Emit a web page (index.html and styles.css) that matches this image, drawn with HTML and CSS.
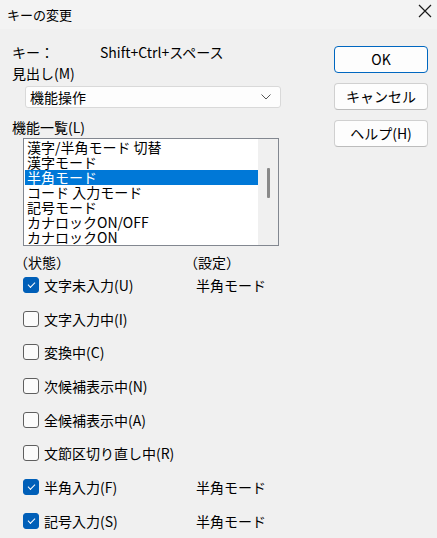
FILE: index.html
```html
<!DOCTYPE html>
<html lang="ja">
<head>
<meta charset="utf-8">
<link rel="stylesheet" href="styles.css">
</head>
<body>
<div class="dialog">
  <div class="titlebar">
    <span class="title">キーの変更</span>
    <svg class="close" width="14" height="14" viewBox="0 0 14 14"><path d="M1 1 L13 13 M13 1 L1 13" stroke="#1a1a1a" stroke-width="1.2" fill="none"/></svg>
  </div>
  <div class="content">
    <div class="left">
      <div class="keyrow"><span class="keylabel">キー：</span><span class="keyval">Shift+Ctrl+スペース</span></div>
      <div class="label">見出し(M)</div>
      <div class="combo"><span>機能操作</span>
        <svg width="10" height="6" viewBox="0 0 10 6"><path d="M0.5 0.5 L5 5 L9.5 0.5" stroke="#555" stroke-width="1" fill="none"/></svg>
      </div>
      <div class="label list-label">機能一覧(L)</div>
      <div class="listbox">
        <div class="items">
          <div class="item">漢字/半角モード 切替</div>
          <div class="item">漢字モード</div>
          <div class="item sel">半角モード</div>
          <div class="item">コード 入力モード</div>
          <div class="item">記号モード</div>
          <div class="item">カナロックON/OFF</div>
          <div class="item">カナロックON</div>
        </div>
        <div class="scroll"><div class="thumb"></div></div>
      </div>
      <div class="heads"><span class="h1">（状態）</span><span class="h2">（設定）</span></div>
      <div class="checks">
        <div class="row"><span class="cb on"></span><span class="cl">文字未入力(U)</span><span class="set">半角モード</span></div>
        <div class="row"><span class="cb"></span><span class="cl">文字入力中(I)</span></div>
        <div class="row"><span class="cb"></span><span class="cl">変換中(C)</span></div>
        <div class="row"><span class="cb"></span><span class="cl">次候補表示中(N)</span></div>
        <div class="row"><span class="cb"></span><span class="cl">全候補表示中(A)</span></div>
        <div class="row"><span class="cb"></span><span class="cl">文節区切り直し中(R)</span></div>
        <div class="row"><span class="cb on"></span><span class="cl">半角入力(F)</span><span class="set">半角モード</span></div>
        <div class="row"><span class="cb on"></span><span class="cl">記号入力(S)</span><span class="set">半角モード</span></div>
      </div>
    </div>
    <div class="right">
      <div class="btn default">OK</div>
      <div class="btn">キャンセル</div>
      <div class="btn">ヘルプ(H)</div>
    </div>
  </div>
</div>
</body>
</html>
```
FILE: styles.css
```css
* { box-sizing: border-box; }
html, body { margin: 0; padding: 0; }
body {
  background: #f0f0f0;
  font-family: "Noto Sans CJK JP", "Noto Sans", sans-serif;
  font-size: 14px;
  color: #000;
}
.dialog { width: 437px; height: 538px; overflow: hidden; display: flex; flex-direction: column; }
.titlebar {
  height: 29px;
  background: #f3f3f3;
  display: flex;
  align-items: center;
  justify-content: space-between;
  padding: 0 5px 0 7px;
}
.title { font-size: 13px; line-height: 29px; }
.close { margin-top: -7px; }
.content { display: flex; flex: 1; }
.left { width: 300px; padding-left: 12px; display: flex; flex-direction: column; }
.keyrow { margin-top: 14px; height: 18px; line-height: 18px; display: flex; }
.keylabel { width: 88px; }
.keyval { }
.label { height: 18px; line-height: 18px; margin-top: 3px; }
.combo {
  margin-top: 4px;
  margin-left: 13px;
  width: 256px;
  height: 22px;
  background: #fdfdfd;
  border: 1px solid #d9d9d9;
  border-radius: 3px;
  display: flex;
  align-items: center;
  justify-content: space-between;
  padding: 0 9px 0 4px;
  line-height: 20px;
}
.list-label { margin-top: 10px; }
.listbox {
  margin-top: 2px;
  margin-left: 11px;
  width: 256px;
  height: 108px;
  border: 1px solid #828790;
  background: #fff;
  display: flex;
  overflow: hidden;
}
.items { flex: 1; padding: 1px 0 0 1px; }
.item { height: 15px; line-height: 15px; padding-left: 2px; white-space: nowrap; }
.item.sel { background: #0078d7; color: #fff; }
.scroll { width: 20px; background: #f0f0f0; display: flex; justify-content: center; padding-top: 29px; }
.thumb { width: 3px; height: 30px; background: #8a8a8a; border-radius: 1px; }
.heads { margin-top: 7px; height: 18px; line-height: 18px; display: flex; margin-left: 2px; }
.h1 { width: 170px; }
.checks { margin-top: 4px; display: flex; flex-direction: column; gap: 13.7px; padding-left: 11px; }
.row { height: 20px; display: flex; align-items: center; line-height: 20px; }
.cb {
  width: 16px; height: 16px;
  border: 1px solid #5f5f5f;
  border-radius: 3px;
  background: #fbfbfb;
  flex: none;
  position: relative;
}
.cb.on { background: #005fb8; border-color: #005fb8; }
.cb.on::after {
  content: "";
  position: absolute;
  left: 4px; top: 4px;
  width: 6px; height: 3px;
  border-left: 1.3px solid #fff;
  border-bottom: 1.3px solid #fff;
  transform: rotate(-45deg);
}
.cl { margin-left: 5px; width: 152px; white-space: nowrap; }
.set { }
.right { margin-left: 34px; width: 94px; display: flex; flex-direction: column; gap: 10px; padding-top: 17px; }
.btn {
  height: 27px;
  border: 1px solid #d0d0d0;
  border-bottom-color: #bcbcbc;
  border-radius: 4px;
  background: #fdfdfd;
  text-align: center;
  line-height: 25px;
}
.btn.default { border: 1px solid #0067c0; }
```
